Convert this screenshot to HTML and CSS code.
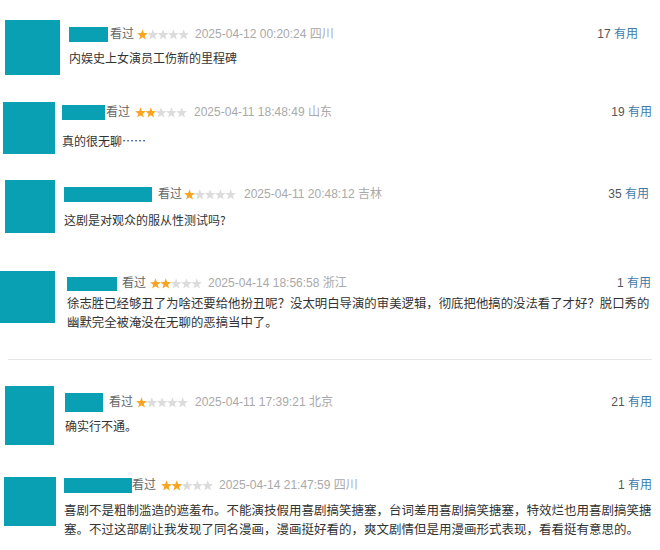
FILE: index.html
```html
<!DOCTYPE html>
<html lang="zh-CN">
<head>
<meta charset="utf-8">
<title>短评</title>
<link rel="stylesheet" href="styles.css">
</head>
<body>
<svg class="defs" width="0" height="0" aria-hidden="true">
  <symbol id="star" viewBox="0 0 10 10">
    <polygon points="5,0.2 6.23,3.7 9.95,3.79 7,6.05 8.06,9.61 5,7.5 1.94,9.61 3,6.05 0.05,3.79 3.77,3.7"/>
  </symbol>
</svg>

<div class="list">
  <div class="row r1">
    <div class="avatar"></div>
    <div class="body">
      <div class="head">
        <span class="name"></span><span class="seen">看过</span>
        <svg class="stars" width="52" height="11" viewBox="0 0 52 11"><use href="#star" x="0" width="11" height="11" class="on"/><use href="#star" x="10.3" width="11" height="11"/><use href="#star" x="20.6" width="11" height="11"/><use href="#star" x="30.9" width="11" height="11"/><use href="#star" x="41.2" width="11" height="11"/></svg>
        <span class="time">2025-04-12 00:20:24 四川</span>
        <span class="useful"><span class="count">17</span> <span class="vote">有用</span></span>
      </div>
      <p class="comment">内娱史上女演员工伤新的里程碑</p>
    </div>
  </div>

  <div class="row r2">
    <div class="avatar"></div>
    <div class="body">
      <div class="head">
        <span class="name"></span><span class="seen">看过</span>
        <svg class="stars" width="52" height="11" viewBox="0 0 52 11"><use href="#star" x="0" width="11" height="11" class="on"/><use href="#star" x="10.3" width="11" height="11" class="on"/><use href="#star" x="20.6" width="11" height="11"/><use href="#star" x="30.9" width="11" height="11"/><use href="#star" x="41.2" width="11" height="11"/></svg>
        <span class="time">2025-04-11 18:48:49 山东</span>
        <span class="useful"><span class="count">19</span> <span class="vote">有用</span></span>
      </div>
      <p class="comment">真的很无聊……</p>
    </div>
  </div>

  <div class="row r3">
    <div class="avatar"></div>
    <div class="body">
      <div class="head">
        <span class="name"></span><span class="seen">看过</span>
        <svg class="stars" width="52" height="11" viewBox="0 0 52 11"><use href="#star" x="0" width="11" height="11" class="on"/><use href="#star" x="10.3" width="11" height="11"/><use href="#star" x="20.6" width="11" height="11"/><use href="#star" x="30.9" width="11" height="11"/><use href="#star" x="41.2" width="11" height="11"/></svg>
        <span class="time">2025-04-11 20:48:12 吉林</span>
        <span class="useful"><span class="count">35</span> <span class="vote">有用</span></span>
      </div>
      <p class="comment">这剧是对观众的服从性测试吗?</p>
    </div>
  </div>

  <div class="row r4">
    <div class="avatar"></div>
    <div class="body">
      <div class="head">
        <span class="name"></span><span class="seen">看过</span>
        <svg class="stars" width="52" height="11" viewBox="0 0 52 11"><use href="#star" x="0" width="11" height="11" class="on"/><use href="#star" x="10.3" width="11" height="11" class="on"/><use href="#star" x="20.6" width="11" height="11"/><use href="#star" x="30.9" width="11" height="11"/><use href="#star" x="41.2" width="11" height="11"/></svg>
        <span class="time">2025-04-14 18:56:58 浙江</span>
        <span class="useful"><span class="count">1</span> <span class="vote">有用</span></span>
      </div>
      <p class="comment">徐志胜已经够丑了为啥还要给他扮丑呢？没太明白导演的审美逻辑，彻底把他搞的没法看了才好？脱口秀的幽默完全被淹没在无聊的恶搞当中了。</p>
    </div>
  </div>

  <hr class="divider">

  <div class="row r5">
    <div class="avatar"></div>
    <div class="body">
      <div class="head">
        <span class="name"></span><span class="seen">看过</span>
        <svg class="stars" width="52" height="11" viewBox="0 0 52 11"><use href="#star" x="0" width="11" height="11" class="on"/><use href="#star" x="10.3" width="11" height="11"/><use href="#star" x="20.6" width="11" height="11"/><use href="#star" x="30.9" width="11" height="11"/><use href="#star" x="41.2" width="11" height="11"/></svg>
        <span class="time">2025-04-11 17:39:21 北京</span>
        <span class="useful"><span class="count">21</span> <span class="vote">有用</span></span>
      </div>
      <p class="comment">确实行不通。</p>
    </div>
  </div>

  <div class="row r6">
    <div class="avatar"></div>
    <div class="body">
      <div class="head">
        <span class="name"></span><span class="seen">看过</span>
        <svg class="stars" width="52" height="11" viewBox="0 0 52 11"><use href="#star" x="0" width="11" height="11" class="on"/><use href="#star" x="10.3" width="11" height="11" class="on"/><use href="#star" x="20.6" width="11" height="11"/><use href="#star" x="30.9" width="11" height="11"/><use href="#star" x="41.2" width="11" height="11"/></svg>
        <span class="time">2025-04-14 21:47:59 四川</span>
        <span class="useful"><span class="count">1</span> <span class="vote">有用</span></span>
      </div>
      <p class="comment">喜剧不是粗制滥造的遮羞布。不能演技假用喜剧搞笑搪塞，台词差用喜剧搞笑搪塞，特效烂也用喜剧搞笑搪塞。不过这部剧让我发现了同名漫画，漫画挺好看的，爽文剧情但是用漫画形式表现，看看挺有意思的。</p>
    </div>
  </div>
</div>
</body>
</html>
```

FILE: styles.css
```css
* { box-sizing: border-box; }

html, body {
  margin: 0;
  padding: 0;
  background: #ffffff;
}

body {
  font-family: "Liberation Sans", "Noto Sans CJK SC", sans-serif;
  color: #333333;
  width: 660px;
  height: 550px;
  overflow: hidden;
}

.defs {
  position: absolute;
  width: 0;
  height: 0;
  overflow: hidden;
}

.list {
  display: flex;
  flex-direction: column;
}

.row {
  display: flex;
  align-items: flex-start;
}

.avatar {
  flex: none;
  background: #0aa0b3;
}

.body {
  flex: 1;
  min-width: 0;
}

.head {
  display: flex;
  align-items: center;
  height: 15px;
  white-space: nowrap;
}

.name {
  display: block;
  flex: none;
  height: 15px;
  background: #0aa0b3;
}

.seen {
  font-size: 12px;
  color: #666666;
  line-height: 15px;
}

.stars {
  flex: none;
  margin-left: 4px;
  fill: #dcdcdc;
}

.stars .on { fill: #f7a520; }

.time {
  margin-left: 6px;
  font-size: 12px;
  color: #a9a9a9;
  line-height: 15px;
}

.useful {
  margin-left: auto;
  font-size: 12px;
  line-height: 15px;
}

.count { color: #555555; }
.vote { color: #3d7aaa; }

.comment {
  margin: 0;
  font-size: 12px;
  line-height: 20px;
  color: #333333;
  font-family: "Noto Sans CJK SC", "Liberation Sans", sans-serif;
}

.divider {
  border: 0;
  height: 1px;
  background: #e6e6e6;
  margin: 27px 8px 0 8px;
}

/* row 1 */
.r1 { margin-top: 20px; padding-left: 5px; padding-right: 22px; }
.r1 .avatar { width: 55px; height: 55px; }
.r1 .body { margin-left: 9px; padding-top: 7px; }
.r1 .name { width: 39px; margin-right: 2px; }
.r1 .stars { margin-left: 3px; }
.r1 .comment { margin-top: 6px; }

/* row 2 */
.r2 { margin-top: 27px; padding-left: 3px; padding-right: 8px; }
.r2 .avatar { width: 52px; height: 52px; }
.r2 .body { margin-left: 7px; padding-top: 3px; }
.r2 .name { width: 43px; margin-right: 1px; }
.r2 .stars { margin-left: 5px; }
.r2 .time { margin-left: 7px; }
.r2 .comment { margin-top: 11px; }

/* row 3 */
.r3 { margin-top: 26px; padding-left: 5px; padding-right: 11px; }
.r3 .avatar { width: 50px; height: 53px; }
.r3 .body { margin-left: 9px; padding-top: 7px; }
.r3 .name { width: 88px; margin-right: 6px; }
.r3 .stars { margin-left: 2px; }
.r3 .time { margin-left: 8px; }
.r3 .comment { margin-top: 8px; }

/* row 4 */
.r4 { margin-top: 38px; padding-left: 0; padding-right: 9px; }
.r4 .avatar { width: 55px; height: 52px; }
.r4 .body { margin-left: 12px; padding-top: 5px; }
.r4 .name { width: 50px; height: 14px; margin-right: 5px; }
.r4 .comment { margin-top: 3px; font-size: 12.4px; line-height: 19px; }

/* row 5 */
.r5 { margin-top: 26px; padding-left: 5px; padding-right: 8px; }
.r5 .avatar { width: 49px; height: 59px; }
.r5 .body { margin-left: 11px; padding-top: 7px; }
.r5 .head { height: 19px; }
.r5 .name { width: 38px; height: 19px; margin-right: 6px; }
.r5 .stars { margin-left: 3px; }
.r5 .time { margin-left: 7px; }
.r5 .comment { margin-top: 4px; }

/* row 6 */
.r6 { margin-top: 32px; padding-left: 4px; padding-right: 8px; }
.r6 .avatar { width: 52px; height: 49px; }
.r6 .body { margin-left: 8px; padding-top: 1px; }
.r6 .name { width: 68px; margin-right: 0; }
.r6 .stars { margin-left: 5px; }
.r6 .comment { margin-top: 7px; font-size: 12.5px; line-height: 19px; margin-right: -4px; }
```
